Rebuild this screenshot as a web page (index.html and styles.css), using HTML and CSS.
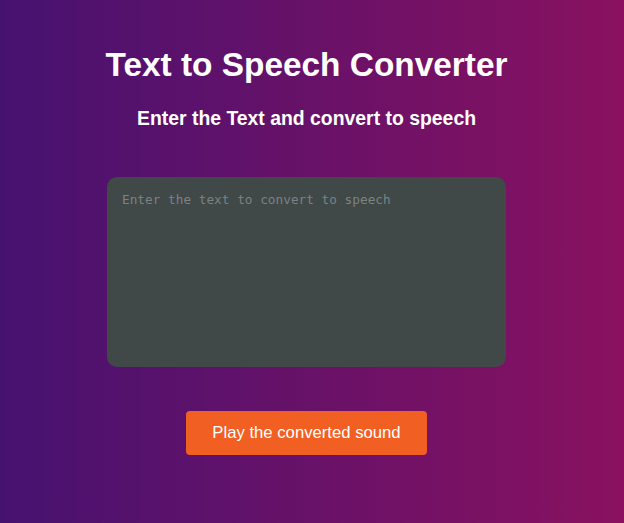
FILE: index.html
```html
<!DOCTYPE html>
<html lang="en">
<head>
<meta charset="utf-8">
<title>Text to Speech Converter</title>
<link rel="stylesheet" href="styles.css">
</head>
<body>
<main class="app">
  <h1 class="title">Text to Speech Converter</h1>
  <h2 class="subtitle">Enter the Text and convert to speech</h2>
  <textarea class="input" placeholder="Enter the text to convert to speech"></textarea>
  <button class="play">Play the converted sound</button>
</main>
</body>
</html>
```
FILE: styles.css
```css
html, body {
  margin: 0;
  height: 100%;
}
body {
  background: linear-gradient(to right, #461270, #8a1160);
  font-family: "Liberation Sans", Arial, sans-serif;
  color: #fff;
  overflow: hidden;
}
.app {
  width: 613px;
  display: flex;
  flex-direction: column;
  align-items: center;
  padding-top: 44px;
}
.title {
  margin: 0;
  font-size: 33.4px;
  font-weight: bold;
  line-height: 42px;
}
.subtitle {
  margin: 20px 0 0;
  font-size: 19.4px;
  font-weight: bold;
  line-height: 24px;
}
.input {
  margin-top: 47px;
  width: 399px;
  height: 190px;
  box-sizing: border-box;
  background: #404848;
  border: none;
  border-radius: 10px;
  padding: 15px 15px;
  font-family: "DejaVu Sans Mono", monospace;
  font-size: 12.75px;
  color: #ddd;
  resize: none;
  outline: none;
}
.input::placeholder {
  color: #7c8282;
}
.play {
  margin-top: 44px;
  width: 241px;
  height: 44px;
  background: #f15f22;
  color: #fff;
  border: none;
  border-radius: 4px;
  font-family: "Liberation Sans", Arial, sans-serif;
  font-size: 16.7px;
}
```
